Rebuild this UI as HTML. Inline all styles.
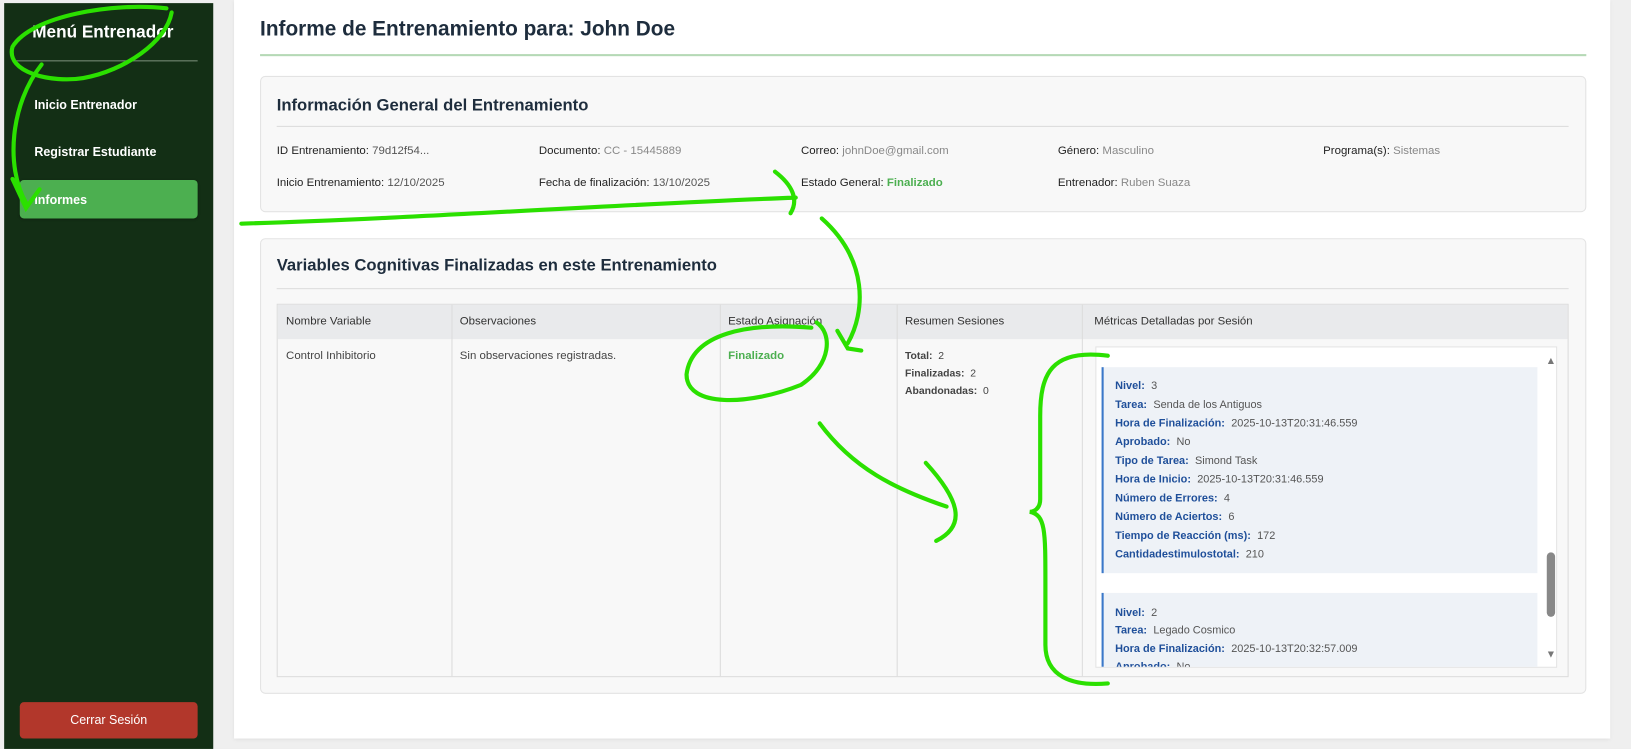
<!DOCTYPE html>
<html><head><meta charset="utf-8"><style>
*{margin:0;padding:0;box-sizing:border-box}
html,body{width:1631px;height:749px;overflow:hidden;background:#eeeeee;font-family:"Liberation Sans",sans-serif}
#w{position:absolute;left:0;top:0;width:1568px;height:720px;transform:scale(1.0402);transform-origin:0 0;background:#efefef}
.a{position:absolute;white-space:nowrap}
#sb{position:absolute;left:4px;top:3px;width:201px;height:717px;background:#132f15}
.nav{position:absolute;color:#fff;font-size:12px;font-weight:bold}
#panel{position:absolute;left:225px;top:0;width:1323px;height:710px;background:#fff;box-shadow:0 1px 4px rgba(0,0,0,.08)}
.card{position:absolute;background:#f8f8f8;border:1px solid #e3e3e3;border-radius:5px}
.h{font-weight:bold;color:#1e2d3d}
.f{font-size:11px;color:#333}
.f span{color:#888}
.f b{color:#222;font-weight:normal}
.th{position:absolute;background:#e9eaec}
.m{position:absolute;left:12px;font-size:10.5px;color:#555}
.m b{color:#1f4f9a;margin-right:6px}
</style></head><body><div id="w">
<div id="sb"></div>
<div class="a" style="left:31px;top:22px;color:#fff;font-size:16.5px;font-weight:bold">Menú Entrenador</div>
<div class="a" style="left:12px;top:58px;width:178px;height:1px;background:#7a8f7b"></div>
<div class="nav a" style="left:33px;top:94px">Inicio Entrenador</div>
<div class="nav a" style="left:33px;top:139px">Registrar Estudiante</div>
<div class="a" style="left:19px;top:173px;width:171px;height:37px;background:#4caf50;border-radius:4px;box-shadow:0 1px 2px rgba(0,0,0,.3)"></div>
<div class="nav a" style="left:33px;top:185px">Informes</div>
<div class="a" style="left:19px;top:675px;width:171px;height:35px;background:#b2372b;border-radius:4px;color:#fff;font-size:12px;text-align:center;line-height:35px">Cerrar Sesión</div>

<div id="panel"></div>
<div class="a h" style="left:250px;top:17px;font-size:20px">Informe de Entrenamiento para: John Doe</div>
<div class="a" style="left:250px;top:52px;width:1275px;height:2px;background:#b5d9b6"></div>

<div class="card" style="left:250px;top:73px;width:1275px;height:131px"></div>
<div class="a h" style="left:266px;top:93px;font-size:16px">Información General del Entrenamiento</div>
<div class="a" style="left:266px;top:121px;width:1242px;height:1px;background:#dcdcdc"></div>
<div class="a f" style="left:266px;top:139px"><b>ID Entrenamiento:</b> <span style="color:#555">79d12f54...</span></div>
<div class="a f" style="left:518px;top:139px"><b>Documento:</b> <span>CC - 15445889</span></div>
<div class="a f" style="left:770px;top:139px"><b>Correo:</b> <span>johnDoe@gmail.com</span></div>
<div class="a f" style="left:1017px;top:139px"><b>Género:</b> <span>Masculino</span></div>
<div class="a f" style="left:1272px;top:139px"><b>Programa(s):</b> <span>Sistemas</span></div>
<div class="a f" style="left:266px;top:170px"><b>Inicio Entrenamiento:</b> <span style="color:#555">12/10/2025</span></div>
<div class="a f" style="left:518px;top:170px"><b>Fecha de finalización:</b> <span style="color:#555">13/10/2025</span></div>
<div class="a f" style="left:770px;top:170px"><b>Estado General:</b> <span style="color:#4caf50;font-weight:bold">Finalizado</span></div>
<div class="a f" style="left:1017px;top:170px"><b>Entrenador:</b> <span>Ruben Suaza</span></div>

<div class="card" style="left:250px;top:229px;width:1275px;height:438px"></div>
<div class="a h" style="left:266px;top:247px;font-size:16px">Variables Cognitivas Finalizadas en este Entrenamiento</div>
<div class="a" style="left:266px;top:277px;width:1242px;height:1px;background:#dcdcdc"></div>
<div class="a" style="left:266px;top:292px;width:1242px;height:359px;border:1px solid #dcdcdc;background:#f8f8f8"></div>
<div class="th" style="left:267px;top:293px;width:1240px;height:33px"></div>
<div class="a" style="left:434px;top:293px;width:1px;height:357px;background:#dcdcdc"></div>
<div class="a" style="left:692px;top:293px;width:1px;height:357px;background:#dcdcdc"></div>
<div class="a" style="left:862px;top:293px;width:1px;height:357px;background:#dcdcdc"></div>
<div class="a" style="left:1040px;top:293px;width:1px;height:357px;background:#dcdcdc"></div>
<div class="a f" style="left:275px;top:303px">Nombre Variable</div>
<div class="a f" style="left:442px;top:303px">Observaciones</div>
<div class="a f" style="left:700px;top:303px">Estado Asignación</div>
<div class="a f" style="left:870px;top:303px">Resumen Sesiones</div>
<div class="a f" style="left:1052px;top:303px">Métricas Detalladas por Sesión</div>
<div class="a f" style="left:275px;top:336px;color:#444">Control Inhibitorio</div>
<div class="a f" style="left:442px;top:336px;color:#444">Sin observaciones registradas.</div>
<div class="a f" style="left:700px;top:336px;color:#4caf50;font-weight:bold">Finalizado</div>
<div class="a" style="left:870px;top:334px;font-size:10px;color:#444;line-height:17px"><b>Total:</b>&nbsp; 2<br><b>Finalizadas:</b>&nbsp; 2<br><b>Abandonadas:</b>&nbsp; 0</div>

<div class="a" style="left:1053px;top:333px;width:444px;height:309px;background:#fff;border:1px solid #e3e3e3;overflow:hidden">
 <div class="a" style="left:5px;top:19px;width:419px;height:198px;background:#eef2f7;border-left:2px solid #3a78c9"></div>
 <div class="a" style="left:5px;top:236px;width:419px;height:90px;background:#eef2f7;border-left:2px solid #3a78c9"></div>
 <div class="m" style="top:31px;left:18px"><b>Nivel:</b>3</div>
 <div class="m" style="top:49px;left:18px"><b>Tarea:</b>Senda de los Antiguos</div>
 <div class="m" style="top:67px;left:18px"><b>Hora de Finalización:</b>2025-10-13T20:31:46.559</div>
 <div class="m" style="top:85px;left:18px"><b>Aprobado:</b>No</div>
 <div class="m" style="top:103px;left:18px"><b>Tipo de Tarea:</b>Simond Task</div>
 <div class="m" style="top:121px;left:18px"><b>Hora de Inicio:</b>2025-10-13T20:31:46.559</div>
 <div class="m" style="top:139px;left:18px"><b>Número de Errores:</b>4</div>
 <div class="m" style="top:157px;left:18px"><b>Número de Aciertos:</b>6</div>
 <div class="m" style="top:175px;left:18px"><b>Tiempo de Reacción (ms):</b>172</div>
 <div class="m" style="top:193px;left:18px"><b>Cantidadestimulostotal:</b>210</div>
 <div class="m" style="top:249px;left:18px"><b>Nivel:</b>2</div>
 <div class="m" style="top:266px;left:18px"><b>Tarea:</b>Legado Cosmico</div>
 <div class="m" style="top:284px;left:18px"><b>Hora de Finalización:</b>2025-10-13T20:32:57.009</div>
 <div class="m" style="top:301px;left:18px"><b>Aprobado:</b>No</div>
 <div class="a" style="left:433px;top:197px;width:8px;height:62px;background:#888;border-radius:4px"></div>
 <div class="a" style="left:432px;top:8px;color:#777;font-size:10px">▲</div>
 <div class="a" style="left:432px;top:290px;color:#777;font-size:10px">▼</div>
</div>

<svg class="a" style="left:0;top:0" width="1568" height="720" fill="none" stroke="#2be000" stroke-width="4" stroke-linecap="round">
<path d="M160,8 C110,2 30,15 12,45 C5,70 50,80 80,75 C120,68 160,40 165,12"/>
<path d="M40,62 C10,100 5,160 25,195 M12,172 L25,200 L38,182"/>
<path d="M232,215 C400,210 600,196 765,190 M745,165 C762,178 768,192 760,205"/>
<path d="M790,210 C835,250 832,300 815,330 M805,318 L815,335 L828,337"/>
<path d="M780,315 C720,310 665,320 660,360 C660,392 720,390 770,370 C800,350 800,320 785,310"/>
<path d="M788,407 C820,450 860,470 910,487 M890,445 C922,480 930,505 900,520"/>
<path d="M1065,342 C1010,335 1000,360 1000,400 L1000,480 C1000,490 993,492 990,492 C1005,495 1005,510 1005,560 L1005,620 C1005,650 1030,660 1065,657"/>
</svg>
</div></body></html>
